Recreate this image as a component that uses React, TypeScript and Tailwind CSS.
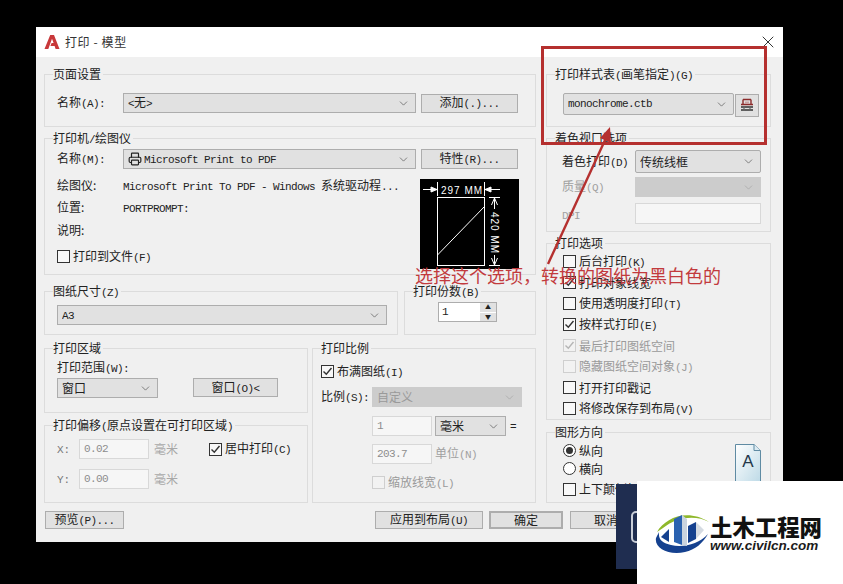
import { ReactNode } from "react"
import { ChevronDown, Printer, X } from "lucide-react"

// mixed CJK / latin label, latin part is narrow mono like the CAD dialog font
function T({ children }: { children: string }) {
  const parts = children.split(/([\x00-\x7f]+)/)
  return (
    <span>
      {parts.map((p, i) =>
        /^[\x00-\x7f]+$/.test(p) ? (
          <span key={i} className="font-['Liberation_Mono',monospace] text-[11px] tracking-[-0.6px] whitespace-pre">
            {p}
          </span>
        ) : (
          p
        )
      )}
    </span>
  )
}

function Group({ title, className, children }: { title: string; className: string; children?: ReactNode }) {
  return (
    <fieldset className={`border border-[#dcdcdc] shrink-0 ${className}`}>
      <legend className="ml-[8px] pr-[2px] h-[16px] leading-[16px] whitespace-nowrap text-[#222]">
        <T>{title}</T>
      </legend>
      {children}
    </fieldset>
  )
}

function Combo({ className, disabled, children }: { className: string; disabled?: boolean; children?: ReactNode }) {
  return (
    <div
      className={`flex items-center border pl-[4px] pr-[5px] shrink-0 ${
        disabled ? "bg-[#cccccc] border-[#cccccc] text-[#9a9a9a]" : "bg-[#e1e1e1] border-[#adadad] text-[#222]"
      } ${className}`}
    >
      <div className="flex-1 flex items-center gap-[2px] whitespace-nowrap overflow-hidden">{children}</div>
      <ChevronDown size={13} strokeWidth={1.3} className={disabled ? "text-[#a5a5a5]" : "text-[#555]"} />
    </div>
  )
}

function Btn({ className, children }: { className: string; children: ReactNode }) {
  return (
    <div className={`flex items-center justify-center bg-[#e1e1e1] border border-[#adadad] text-[#222] whitespace-nowrap shrink-0 ${className}`}>
      {children}
    </div>
  )
}

function Check({ checked, disabled, label, className }: { checked?: boolean; disabled?: boolean; label: string; className?: string }) {
  return (
    <div className={`flex items-center h-[13px] whitespace-nowrap ${disabled ? "text-[#9a9a9a]" : "text-[#222]"} ${className ?? ""}`}>
      <span className={`w-[13px] h-[13px] border flex items-center justify-center shrink-0 ${disabled ? "border-[#cfcfcf] bg-[#f2f2f2]" : "border-[#333] bg-[#f8f8f8]"}`}>
        {checked && (
          <svg width="11" height="11" viewBox="0 0 11 11" fill="none">
            <path d="M1.5 5.5 L4.3 8.3 L9.5 2" stroke={disabled ? "#b5b5b5" : "#333"} strokeWidth="1.4" />
          </svg>
        )}
      </span>
      <span className="ml-[3px]">
        <T>{label}</T>
      </span>
    </div>
  )
}

function Radio({ checked, label, className }: { checked?: boolean; label: string; className?: string }) {
  return (
    <div className={`flex items-center h-[13px] text-[#222] ${className ?? ""}`}>
      <span className="w-[13px] h-[13px] rounded-full border border-[#333] bg-white flex items-center justify-center">
        {checked && <span className="w-[7px] h-[7px] rounded-full bg-[#333]" />}
      </span>
      <span className="ml-[3px]">{label}</span>
    </div>
  )
}

function Input({ className, value }: { className: string; value?: string }) {
  return (
    <div className={`bg-[#f6f6f6] border border-[#d8d8d8] text-[#8d8d8d] font-['Liberation_Mono',monospace] text-[11px] tracking-[-0.6px] flex items-center pl-[4px] shrink-0 ${className}`}>
      {value}
    </div>
  )
}

function Logo() {
  return (
    <svg width="16" height="16" viewBox="0 0 16 16">
      <path d="M0.5 15 L6.2 1 H10 L15.5 15 H11.6 L10.6 12 H6.4 L7.6 9 H9.6 L8 4.8 L4.3 15 Z" fill="#c8383a" />
    </svg>
  )
}

function SheetPreview() {
  return (
    <svg width="99" height="90" viewBox="0 0 99 90" className="shrink-0">
      <rect width="99" height="90" fill="#000" />
      <g stroke="#fff" strokeWidth="1" fill="none">
        <rect x="17.5" y="18.5" width="47" height="68" />
        <path d="M17.5 76 L64 28" />
        <path d="M3 10.5 H17 M65 10.5 H80 M17.5 3 V17 M64.5 3 V17 M69 18.5 H80 M69 86.5 H80 M74.5 19 V30 M74.5 76 V86" />
        <path d="M11 8 L17 10.5 L11 13 Z M65 10.5 L71 8 V13 Z" fill="#fff" />
        <path d="M74.5 19 L71.5 26 M74.5 19 L77.5 26 M74.5 86 L71.5 79 M74.5 86 L77.5 79" />
      </g>
      <text x="21" y="14.5" fill="#fff" fontSize="10" fontFamily="'Liberation Sans', sans-serif" letterSpacing="1">297 MM</text>
      <text transform="translate(70.5 33) rotate(90)" fill="#fff" fontSize="10" fontFamily="'Liberation Sans', sans-serif" letterSpacing="1">420  MM</text>
    </svg>
  )
}

function PlotIcon() {
  return (
    <svg width="14" height="15" viewBox="0 0 14 15" fill="none">
      <path d="M3 1.5 H11 M3 1.5 V6 M11 1.5 V6 M1 6.5 H13" stroke="#8c2b2b" strokeWidth="1.4" />
      <path d="M5 3.5 H9 V6 H5 Z" fill="#c9a3a3" />
      <path d="M1 9 H13 M1 12 H13" stroke="#333" strokeWidth="1.6" />
      <path d="M4 8 V13 M10 8 V13" stroke="#666" strokeWidth="1.2" />
    </svg>
  )
}

function PageIcon() {
  return (
    <svg width="26" height="40" viewBox="0 0 26 40" className="shrink-0">
      <defs>
        <linearGradient id="pg" x1="0" y1="0" x2="1" y2="1">
          <stop offset="0" stopColor="#ffffff" />
          <stop offset="1" stopColor="#bcd9e6" />
        </linearGradient>
      </defs>
      <path d="M0.5 0.5 H19 L25.5 6.5 V39.5 H0.5 Z" fill="url(#pg)" stroke="#5f8ba3" />
      <path d="M19 0.5 V6.5 H25.5" fill="#dcebf2" stroke="#5f8ba3" />
      <text x="13" y="23" textAnchor="middle" fontSize="17" fill="#23384a" fontFamily="'Liberation Sans', sans-serif">A</text>
    </svg>
  )
}

function CivilLogo() {
  return (
    <svg width="56" height="46" viewBox="0 0 56 46">
      <path d="M2 22 C10 8 32 -2 54 12 C42 5 22 6 8 18 Z" fill="#8fb82a" />
      <path d="M1 28 C-1 38 14 46 30 42 C40 40 48 33 53 24 C44 34 28 38 16 35 C8 33 3 30 4 22 Z" fill="#15418f" />
      <path d="M19 32 V9 L27 5 V35 Z" fill="#2a62b0" />
      <path d="M27 5 L32 9 V36 L27 35 Z" fill="#c9d3df" />
      <path d="M6 27 L14 19 V32 Z" fill="#15418f" />
      <path d="M33 33 V16 L41 12 V29 Z" fill="#15418f" />
      <path d="M41 12 L49 20 L41 29 Z" fill="#d5dbe2" />
    </svg>
  )
}

export default function App() {
  return (
    <div className="relative w-[843px] h-[584px] overflow-hidden bg-black pt-[27px] pl-[36px] text-[12px] leading-[16px] font-['Noto_Sans_CJK_SC','Noto_Sans',sans-serif]">
      {/* dialog */}
      <div className="w-[747px] h-[515px] bg-[#f0f0f0] flex flex-col">
        <div className="h-[30px] bg-white flex items-center pl-[8px] pr-[5px] shrink-0 text-[#333]">
          <Logo />
          <span className="ml-[5px] tracking-[0.6px]">打印 - 模型</span>
          <X size={20} strokeWidth={1.1} className="ml-auto text-[#222]" />
        </div>

        <div className="flex pl-[8px] pt-[9px] gap-[10px] h-[446px] shrink-0">
          {/* left part */}
          <div className="w-[492px] flex flex-col">
            <Group title="页面设置" className="h-[61px]">
              <div className="flex items-center pl-[12px] mt-[11px]">
                <span className="w-[66px] text-[#222]"><T>名称(A):</T></span>
                <Combo className="w-[293px] h-[20px]"><T>{"<无>"}</T></Combo>
                <Btn className="ml-[5px] w-[97px] h-[19px]"><T>添加(.)...</T></Btn>
              </div>
            </Group>

            <Group title="打印机/绘图仪" className="h-[145px] mt-[3px]">
              <div className="flex items-center pl-[12px] mt-[3px]">
                <span className="w-[66px] text-[#222]"><T>名称(M):</T></span>
                <Combo className="w-[293px] h-[20px]">
                  <Printer size={14} strokeWidth={2} />
                  <T>Microsoft Print to PDF</T>
                </Combo>
                <Btn className="ml-[5px] w-[97px] h-[20px]"><T>特性(R)...</T></Btn>
              </div>
              <div className="flex mt-[10px] pl-[12px]">
                <div className="w-[363px] text-[#222]">
                  <div className="flex h-[16px] -mt-[2px]">
                    <span className="w-[66px]">绘图仪:</span>
                    <T>Microsoft Print To PDF - Windows 系统驱动程...</T>
                  </div>
                  <div className="flex h-[16px] mt-[6px]">
                    <span className="w-[66px]">位置:</span>
                    <T>PORTPROMPT:</T>
                  </div>
                  <div className="h-[16px] mt-[7px]">说明:</div>
                  <Check label="打印到文件(F)" className="mt-[12px]" />
                </div>
                <SheetPreview />
              </div>
            </Group>

            <div className="flex mt-[8px] gap-[6px]">
              <Group title="图纸尺寸(Z)" className="w-[354px] h-[52px]">
                <Combo className="ml-[12px] mt-[6px] w-[330px] h-[20px]"><T>A3</T></Combo>
              </Group>
              <Group title="打印份数(B)" className="w-[132px] h-[52px]">
                <div className="ml-[33px] mt-[3px] w-[59px] h-[20px] flex border border-[#adadad] bg-white">
                  <span className="flex-1 pl-[3px] font-['Liberation_Mono',monospace] text-[11px] leading-[18px] text-[#222]">1</span>
                  <div className="w-[16px] flex flex-col gap-[1px] bg-white">
                    <span className="flex-1 bg-[#e1e1e1] flex items-center justify-center text-[6px] leading-none text-[#222]">▲</span>
                    <span className="flex-1 bg-[#e1e1e1] flex items-center justify-center text-[6px] leading-none text-[#222]">▼</span>
                  </div>
                </div>
              </Group>
            </div>

            <div className="flex mt-[5px] gap-[4px]">
              <div className="w-[264px] flex flex-col">
                <Group title="打印区域" className="h-[73px]">
                  <div className="pl-[12px] text-[#222] mt-[3px]"><T>打印范围(W):</T></div>
                  <div className="flex items-start pl-[12px] mt-[1px]">
                    <Combo className="w-[101px] h-[20px]">窗口</Combo>
                    <Btn className="ml-[35px] w-[85px] h-[19px]"><T>{"窗口(O)<"}</T></Btn>
                  </div>
                </Group>
                <Group title="打印偏移(原点设置在可打印区域)" className="h-[86px] mt-[4px]">
                  <div className="flex items-center pl-[12px] mt-[6px] text-[#777]">
                    <span className="w-[22px] font-['Liberation_Mono',monospace] text-[11px] pt-[2px]">X:</span>
                    <Input className="w-[70px] h-[20px]" value="0.02" />
                    <span className="ml-[5px] w-[55px] text-[#a8a8a8]">毫米</span>
                    <Check checked label="居中打印(C)" />
                  </div>
                  <div className="flex items-center pl-[12px] mt-[10px] text-[#777]">
                    <span className="w-[22px] font-['Liberation_Mono',monospace] text-[11px] pt-[2px]">Y:</span>
                    <Input className="w-[70px] h-[20px]" value="0.00" />
                    <span className="ml-[5px] text-[#a8a8a8]">毫米</span>
                  </div>
                </Group>
              </div>
              <Group title="打印比例" className="w-[224px] h-[163px]">
                <Check checked label="布满图纸(I)" className="ml-[8px] mt-[9px]" />
                <div className="flex items-center ml-[8px] mt-[9px]">
                  <span className="w-[51px] text-[#222]"><T>比例(S):</T></span>
                  <Combo disabled className="w-[150px] h-[20px]">自定义</Combo>
                </div>
                <div className="flex items-center ml-[59px] mt-[9px]">
                  <Input className="w-[60px] h-[20px]" value="1" />
                  <Combo className="ml-[3px] w-[71px] h-[20px]">毫米</Combo>
                  <span className="ml-[4px] text-[#222]"><T>=</T></span>
                </div>
                <div className="flex items-center ml-[59px] mt-[8px]">
                  <Input className="w-[60px] h-[20px]" value="203.7" />
                  <span className="ml-[3px] text-[#a0a0a0]"><T>单位(N)</T></span>
                </div>
                <Check disabled label="缩放线宽(L)" className="ml-[59px] mt-[12px]" />
              </Group>
            </div>
          </div>

          {/* right part */}
          <div className="w-[225px] flex flex-col">
            <Group title="打印样式表(画笔指定)(G)" className="h-[61px]">
              <div className="flex items-start pl-[16px] mt-[11px]">
                <Combo className="w-[171px] h-[22px] rounded-[2px]">
                  <span className="font-['Liberation_Mono',monospace] text-[11px] tracking-[-0.6px]">monochrome.ctb</span>
                </Combo>
                <div className="ml-[1px] w-[24px] h-[23px] mt-[1px] flex items-center justify-center bg-[#e1e1e1] border border-[#adadad]">
                  <PlotIcon />
                </div>
              </div>
            </Group>

            <Group title="着色视口选项" className="h-[102px] mt-[3px]">
              <div className="flex items-center pl-[15px] mt-[4px]">
                <span className="w-[73px] text-[#222]"><T>着色打印(D)</T></span>
                <Combo className="w-[126px] h-[23px] rounded-[2px]">传统线框</Combo>
              </div>
              <div className="flex items-center pl-[15px] mt-[4px]">
                <span className="w-[73px] text-[#a0a0a0]"><T>质量(Q)</T></span>
                <Combo disabled className="w-[126px] h-[20px]" />
              </div>
              <div className="flex items-center pl-[15px] mt-[6px]">
                <span className="w-[73px] text-[#a0a0a0] pt-[2px]"><T>DPI</T></span>
                <Input className="w-[126px] h-[21px]" />
              </div>
            </Group>

            <Group title="打印选项" className="h-[185px] mt-[3px]">
              <div className="flex flex-col gap-[8px] pl-[16px] mt-[4px]">
                <Check label="后台打印(K)" />
                <Check checked label="打印对象线宽" />
                <Check label="使用透明度打印(T)" />
                <Check checked label="按样式打印(E)" />
                <Check checked disabled label="最后打印图纸空间" />
                <Check disabled label="隐藏图纸空间对象(J)" />
                <Check label="打开打印戳记" />
                <Check label="将修改保存到布局(V)" />
              </div>
            </Group>

            <Group title="图形方向" className="h-[79px] mt-[4px]">
              <div className="flex pl-[16px] mt-[4px]">
                <div className="w-[172px]">
                  <Radio checked label="纵向" />
                  <Radio label="横向" className="mt-[5px]" />
                  <Check label="上下颠倒打印(-)" className="mt-[8px]" />
                </div>
                <PageIcon />
              </div>
            </Group>
          </div>
        </div>

        <div className="flex items-start pl-[9px] mt-[8px]">
          <Btn className="w-[79px] h-[18px]"><T>预览(P)...</T></Btn>
          <Btn className="ml-[251px] w-[108px] h-[18px]"><T>应用到布局(U)</T></Btn>
          <Btn className="ml-[6px] w-[74px] h-[18px] border-2 border-[#1c6ea4]">确定</Btn>
          <Btn className="ml-[7px] w-[72px] h-[18px]">取消</Btn>
        </div>
      </div>

      {/* annotation drawn on top of the screenshot */}
      <div className="absolute left-[541px] top-[46px] w-[226px] h-[99px] border-[3px] border-[#b5302f]" />
      <svg width="843" height="584" className="absolute left-0 top-0 pointer-events-none">
        <path d="M548 264 L606 138" stroke="#b5302f" strokeWidth="2.4" fill="none" />
        <path d="M610 127 L611 143 L600 138 Z" fill="#b5302f" />
      </svg>
      <div className="absolute left-[415px] top-[263px] text-[18px] leading-[24px] text-[#c23a3d] whitespace-nowrap">
        选择这个选项，转换的图纸为黑白色的
      </div>

      {/* watermark */}
      <div className="absolute left-[616px] top-[484px] w-[21px] h-[85px] bg-[#1f2d50] flex items-center justify-end overflow-hidden">
        <div className="w-[12px] h-[32px] border-[2px] border-[#c9ced8] rounded-[5px] -mr-[6px]" />
      </div>
      <div className="absolute left-[637px] top-[481px] w-[206px] h-[103px] bg-white flex items-center pl-[18px]">
        <CivilLogo />
        <div className="-ml-[1px] mt-[2px]">
          <div className="text-[22.4px] leading-[23px] font-black text-[#111] whitespace-nowrap">土木工程网</div>
          <div className="text-[13.5px] leading-[15px] font-bold italic text-[#1b1b1b] font-['Liberation_Sans',sans-serif]">www.civilcn.com</div>
        </div>
      </div>
    </div>
  )
}
